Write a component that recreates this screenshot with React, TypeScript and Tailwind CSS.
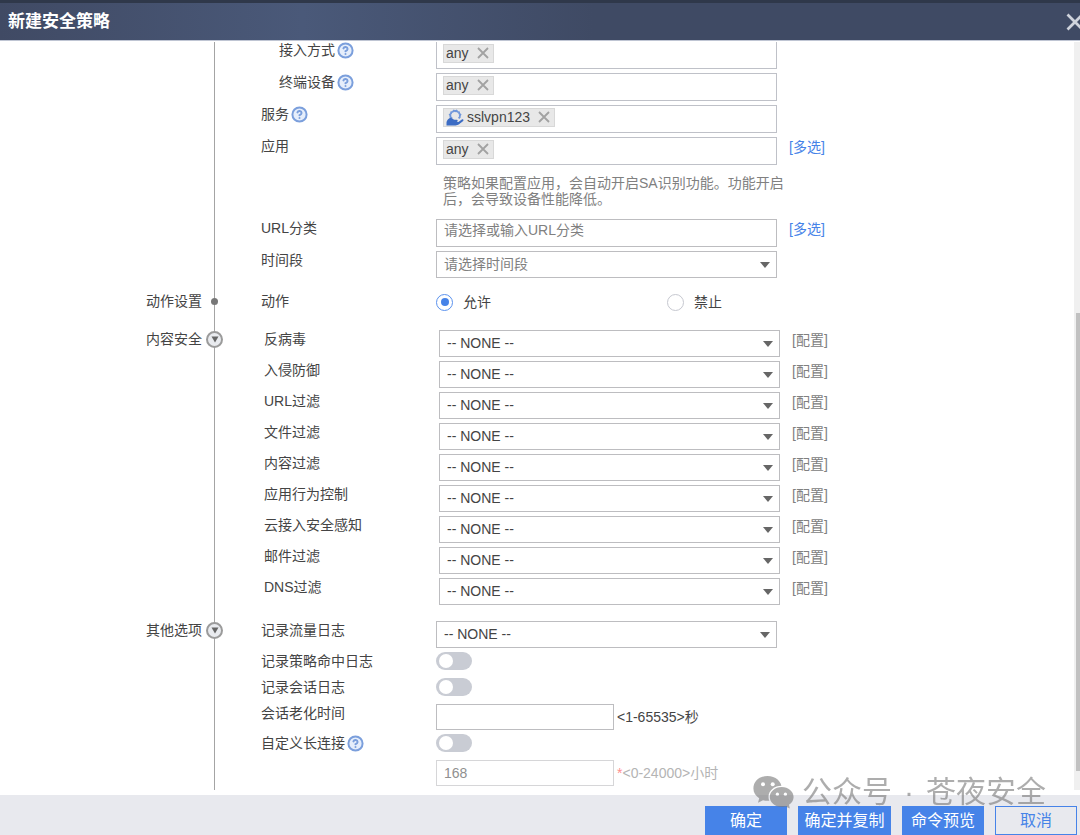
import React, { FC, ReactNode } from 'react';
import { CircleHelp } from 'lucide-react';

const securityProfiles = [
  { id: 'av', label: '反病毒' },
  { id: 'ips', label: '入侵防御' },
  { id: 'url-filter', label: 'URL过滤' },
  { id: 'file-filter', label: '文件过滤' },
  { id: 'content-filter', label: '内容过滤' },
  { id: 'app-control', label: '应用行为控制' },
  { id: 'cloud-access', label: '云接入安全感知' },
  { id: 'mail-filter', label: '邮件过滤' },
  { id: 'dns-filter', label: 'DNS过滤' },
];

const HelpIcon: FC = () => (
  <CircleHelp
    className="ml-0.5 size-[17px] shrink-0 fill-[#e6eefb] text-[#7b9fdc]"
    strokeWidth={2.8}
    aria-hidden="true"
  />
);

const CrossIcon: FC<{ className: string }> = ({ className }) => (
  <svg viewBox="0 0 12 12" className={className} aria-hidden="true">
    <path
      d="M1 1L11 11M11 1L1 11"
      fill="none"
      stroke="currentColor"
      strokeWidth="1.8"
    />
  </svg>
);

const ServiceIcon: FC = () => (
  <svg
    viewBox="0 0 18 17"
    className="mr-[3px] h-[17px] w-[18px] shrink-0"
    aria-hidden="true"
  >
    <path
      d="M6 9.4L4.4 8V6.6L3.8 5.6L5 4.6L5.2 3.2L6.8 2.8L7.8 1.6L9.2 2.2L10.6 1.6L11.4 2.8L13 3.2L13.2 4.6L14.4 5.6L13.8 6.8V8.2L12.6 9.4"
      fill="none"
      stroke="#6f96da"
      strokeWidth="1.8"
    />
    <path
      d="M0.5 16.4V13.6C0.8 11.6 2.4 9 4.6 9C6.4 9 7.2 10.6 8.6 10.8H10.8C12 11 12 12.6 10.8 12.7L12.4 12.9L15.8 10.4C17.2 9.8 18 10.8 17.2 11.9L13 15.3C12 16.1 10.8 16.4 9.6 16.4Z"
      fill="#3c6cc4"
    />
  </svg>
);

const WechatIcon: FC = () => (
  <svg viewBox="0 0 41 33" className="h-[33px] w-[41px]" aria-hidden="true">
    <mask id="back-bubble">
      <rect width="41" height="33" fill="white" />
      <ellipse cx="28.7" cy="21" rx="13.2" ry="11.2" fill="black" />
      <circle cx="10" cy="8.3" r="2" fill="black" />
      <circle cx="19.7" cy="8.3" r="2" fill="black" />
    </mask>
    <mask id="front-bubble">
      <rect width="41" height="33" fill="white" />
      <circle cx="24.4" cy="18.2" r="1.6" fill="black" />
      <circle cx="32.4" cy="18.2" r="1.6" fill="black" />
    </mask>
    <g fill="currentColor">
      <path
        mask="url(#back-bubble)"
        d="M14.5 0C22.5 0 28.8 5.5 28.8 12.4S22.5 24.8 14.5 24.8C12.9 24.8 11.4 24.6 10 24.2L5 26.8L6.2 22.2C2.6 19.9 0.4 16.4 0.4 12.4C0.4 5.5 6.5 0 14.5 0Z"
      />
      <path
        mask="url(#front-bubble)"
        d="M28.7 11C35.3 11 40.6 15.5 40.6 21C40.6 24.2 38.8 27 36 28.8L36.8 32.6L32.6 30.4C31.4 30.8 30 31 28.7 31C22 31 16.8 26.5 16.8 21S22 11 28.7 11Z"
      />
    </g>
  </svg>
);

type TSectionProps = {
  title?: string;
  marker?: 'dot' | 'toggle';
  className: string;
  children: ReactNode;
};

// Title on the left of the time line, rows on the right of it
const Section: FC<TSectionProps> = ({ title, marker, className, children }) => (
  <section className="flex">
    <div
      className={`w-[214px] shrink-0 pr-3 text-right leading-[18px] ${className}`}
    >
      {title && <h2>{title}</h2>}
    </div>
    <div
      className={`relative min-w-0 flex-1 border-l border-[#a4a4a4] pl-[46px] ${className}`}
    >
      {marker === 'dot' && (
        <span className="absolute -left-1 mt-1.5 size-[7px] rounded-full bg-[#777]" />
      )}
      {marker === 'toggle' && (
        <button
          type="button"
          aria-label={`收起${title}`}
          className="absolute -left-[9px] mt-px flex size-[17px] items-center justify-center rounded-full border-2 border-[#9b9b9b] bg-[#e9ebef]"
        >
          <svg viewBox="0 0 8 7" className="h-[7px] w-2" aria-hidden="true">
            <path d="M0.5 0.5H7.5L4 6.5Z" fill="#666" />
          </svg>
        </button>
      )}
      {children}
    </div>
  </section>
);

type TRowProps = {
  id?: string;
  label?: string;
  help?: boolean;
  indent?: boolean;
  className?: string;
  children: ReactNode;
};

const Row: FC<TRowProps> = ({
  id,
  label,
  help,
  indent,
  className = '',
  children,
}) => (
  <div className={`flex items-start ${className}`}>
    <div
      className={`flex w-[175px] shrink-0 items-center leading-[18px] ${indent ? 'pl-[18px]' : ''}`}
    >
      {label && <label htmlFor={id}>{label}</label>}
      {help && <HelpIcon />}
    </div>
    {children}
  </div>
);

type TTagInputProps = {
  id: string;
  tag: string;
  icon?: ReactNode;
};

const TagInput: FC<TTagInputProps> = ({ id, tag, icon }) => (
  <div className="flex h-7 w-[341px] items-start border border-[#bfc1c8] px-1.5 pt-0.5">
    <span className="flex h-[19px] shrink-0 items-center border border-[#d8d8d8] bg-[#e8e8e8] pr-1 pl-0.5">
      {icon}
      <span className="leading-[17px]">{tag}</span>
      <button type="button" aria-label={`删除${tag}`} className="ml-2 pb-0.5">
        <CrossIcon className="size-3 text-[#a2a2a2]" />
      </button>
    </span>
    <input id={id} className="min-w-0 flex-1 outline-none" />
  </div>
);

type TSelectProps = {
  id: string;
  option?: string;
  className?: string;
};

const Select: FC<TSelectProps> = ({
  id,
  option = '-- NONE --',
  className = 'h-[27px]',
}) => (
  <div className="relative w-[341px]">
    <select
      id={id}
      className={`block w-full appearance-none border border-[#bdbdc0] bg-white px-[7px] ${className}`}
    >
      <option>{option}</option>
    </select>
    <svg
      viewBox="0 0 10 6"
      className="pointer-events-none absolute top-1/2 right-[7px] h-1.5 w-2.5 -translate-y-1/2"
      aria-hidden="true"
    >
      <path d="M0 0H10L5 6Z" fill="#666" />
    </svg>
  </div>
);

const Toggle: FC<{ id: string }> = ({ id }) => (
  <input
    id={id}
    type="checkbox"
    role="switch"
    className="flex h-[18px] w-9 appearance-none items-center rounded-full bg-[#c9ccd4] px-[3px] before:size-3.5 before:rounded-full before:bg-white checked:justify-end checked:bg-[#4683e8]"
  />
);

const Radio: FC<{ id: string; label: string; checked?: boolean }> = ({
  id,
  label,
  checked,
}) => (
  <div className="flex w-[231px] items-center leading-5">
    <input
      id={id}
      type="radio"
      name="action"
      defaultChecked={checked}
      className="flex size-[17px] appearance-none items-center justify-center rounded-full border border-[#c6c8d0] checked:border-[#5b92ee] checked:before:size-2 checked:before:rounded-full checked:before:bg-[#4683e8]"
    />
    <label htmlFor={id} className="pl-2.5">
      {label}
    </label>
  </div>
);

export default function App() {
  return (
    <div className="flex min-h-screen flex-col bg-white font-['Liberation_Sans','Noto_Sans_CJK_SC',sans-serif] text-[14px] text-[#444]">
      <header className="flex h-[41px] items-center justify-between border-t-3 border-b border-t-[#2f384a] border-b-[#bfc5d3] bg-linear-to-r from-[#404a64] via-[#4a5979] via-28% to-[#3f4a64] to-55% pl-2 text-white">
        <h1 className="text-[17px] font-bold">新建安全策略</h1>
        <button type="button" aria-label="关闭" className="-mr-1">
          <CrossIcon className="size-[18px] text-[#cfd3dc]" />
        </button>
      </header>

      <main className="mt-px flex flex-1 overflow-hidden pb-[5px]">
        <form id="policy-form" className="-mt-px min-w-0 flex-1">
          <Section className="">
            <div className="flex flex-col gap-1">
              <Row id="access-mode" label="接入方式" help indent>
                <TagInput id="access-mode" tag="any" />
              </Row>
              <Row id="terminal" label="终端设备" help indent>
                <TagInput id="terminal" tag="any" />
              </Row>
              <Row id="service" label="服务" help>
                <TagInput id="service" tag="sslvpn123" icon={<ServiceIcon />} />
              </Row>
              <Row id="application" label="应用">
                <TagInput id="application" tag="any" />
                <a href="#application" className="ml-3 leading-5 text-[#4683e8]">
                  [多选]
                </a>
              </Row>
            </div>
            <p className="mt-2.5 mb-3 ml-[175px] w-[350px] pl-[7px] leading-4 text-[#808080]">
              策略如果配置应用，会自动开启SA识别功能。功能开启后，会导致设备性能降低。
            </p>
            <div className="flex flex-col gap-1">
              <Row id="url-category" label="URL分类">
                <input
                  id="url-category"
                  placeholder="请选择或输入URL分类"
                  className="h-7 w-[341px] border border-[#bdbdc0] px-[7px] pb-1.5 outline-none placeholder:text-[#808080]"
                />
                <a href="#url-category" className="ml-3 leading-5 text-[#4683e8]">
                  [多选]
                </a>
              </Row>
              <Row id="schedule" label="时间段">
                <Select
                  id="schedule"
                  option="请选择时间段"
                  className="h-[27px] text-[#808080]"
                />
              </Row>
            </div>
          </Section>

          <Section title="动作设置" marker="dot" className="pt-3.5">
            <Row label="动作">
              <Radio id="permit" label="允许" checked />
              <Radio id="deny" label="禁止" />
            </Row>
          </Section>

          <Section title="内容安全" marker="toggle" className="pt-[18px]">
            <div className="ml-[3px] flex flex-col gap-1">
              {securityProfiles.map(({ id, label }) => (
                <Row key={id} id={id} label={label}>
                  <Select id={id} />
                  <a href={`#${id}`} className="ml-3 leading-5 text-[#808080]">
                    [配置]
                  </a>
                </Row>
              ))}
            </div>
          </Section>

          <Section title="其他选项" marker="toggle" className="pt-4">
            <Row id="traffic-log" label="记录流量日志">
              <Select id="traffic-log" />
            </Row>
            <Row id="hit-log" label="记录策略命中日志" className="mt-1">
              <Toggle id="hit-log" />
            </Row>
            <Row id="session-log" label="记录会话日志" className="mt-2">
              <Toggle id="session-log" />
            </Row>
            <Row id="aging-time" label="会话老化时间" className="mt-2">
              <input
                id="aging-time"
                className="h-[26px] w-[178px] border border-[#bdbdc0] px-[7px] outline-none"
              />
              <span className="ml-[3px] leading-[26px]">&lt;1-65535&gt;秒</span>
            </Row>
            <Row id="long-session" label="自定义长连接" help className="mt-1">
              <Toggle id="long-session" />
            </Row>
            <Row className="mt-2 pb-1">
              <input
                aria-label="长连接时间"
                disabled
                defaultValue="168"
                className="h-[26px] w-[178px] border border-[#d6d6d8] px-[7px] text-[#909090]"
              />
              <span className="ml-[3px] leading-[26px] text-[#b4b4b4]">
                <span className="text-[#ff8f8f]">*</span>&lt;0-24000&gt;小时
              </span>
            </Row>
          </Section>
        </form>

        <div className="flex w-1.5 shrink-0 flex-col bg-[#f0f0f0] pl-0.5">
          <div className="flex-[271]" />
          <div className="flex-[457] bg-[#c1c1c1]" />
          <div className="flex-[19]" />
        </div>
      </main>

      <footer className="relative flex justify-end gap-[11px] bg-[#e8e9ee] pt-[11px] pr-[3px] pb-px text-[16px] text-white">
        <button
          type="submit"
          form="policy-form"
          className="h-[29px] w-[82px] bg-[#4683e8]"
        >
          确定
        </button>
        <button type="button" className="h-[29px] w-[93px] bg-[#4683e8]">
          确定并复制
        </button>
        <button type="button" className="h-[29px] w-[82px] bg-[#4683e8]">
          命令预览
        </button>
        <button
          type="button"
          className="h-[29px] w-[82px] border border-[#4683e8] text-[#4683e8]"
        >
          取消
        </button>
        <div className="pointer-events-none absolute right-[34px] bottom-6 flex items-center gap-3 text-[30px] leading-10 text-[#777] opacity-60">
          <WechatIcon />
          <span className="-ml-1">公众号</span>
          <span>·</span>
          <span>苍夜安全</span>
        </div>
      </footer>
    </div>
  );
}
